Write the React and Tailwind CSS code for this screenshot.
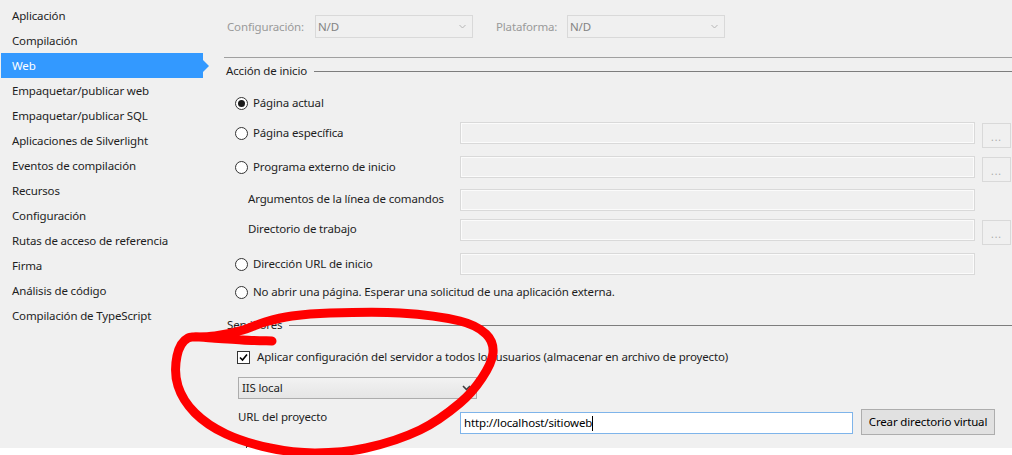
import React from "react";

const sidebarItems = [
  "Aplicación",
  "Compilación",
  "Web",
  "Empaquetar/publicar web",
  "Empaquetar/publicar SQL",
  "Aplicaciones de Silverlight",
  "Eventos de compilación",
  "Recursos",
  "Configuración",
  "Rutas de acceso de referencia",
  "Firma",
  "Análisis de código",
  "Compilación de TypeScript",
];

function smoothPath(pts) {
  let d = `M ${pts[0][0]} ${pts[0][1]}`;
  for (let i = 0; i < pts.length - 1; i++) {
    const p0 = pts[i - 1] || pts[i];
    const p1 = pts[i];
    const p2 = pts[i + 1];
    const p3 = pts[i + 2] || p2;
    const c1x = p1[0] + (p2[0] - p0[0]) / 6;
    const c1y = p1[1] + (p2[1] - p0[1]) / 6;
    const c2x = p2[0] - (p3[0] - p1[0]) / 6;
    const c2y = p2[1] - (p3[1] - p1[1]) / 6;
    d += ` C ${c1x} ${c1y} ${c2x} ${c2y} ${p2[0]} ${p2[1]}`;
  }
  return d;
}

const redPts = [
  [272, 341], [242, 340], [212, 338], [188, 338], [177, 356], [178, 386],
  [195, 413], [226, 434], [270, 448], [315, 453], [366, 448], [420, 430],
  [460, 403], [482, 378], [493, 353], [486, 334], [460, 321], [400, 313],
  [330, 313], [292, 316], [265, 322], [243, 330], [215, 336], [192, 337],
];

function Radio({ checked }) {
  return (
    <span className="w-[13px] h-[13px] rounded-full border border-[#333333] bg-white flex items-center justify-center shrink-0">
      {checked && <span className="w-[7px] h-[7px] rounded-full bg-[#1a1a1a]" />}
    </span>
  );
}

function Checkbox({ checked }) {
  return (
    <span className="w-[13px] h-[13px] border border-[#333333] bg-white flex items-center justify-center shrink-0">
      {checked && (
        <svg width="9" height="9" viewBox="0 0 9 9">
          <path d="M1 4.5 L3.5 7 L8 1.5" fill="none" stroke="#000" strokeWidth="1.6" />
        </svg>
      )}
    </span>
  );
}

function DisabledBox() {
  return (
    <div className="w-[515px] h-[22px] border border-[#d9d9d9] bg-[#f0f0f0] shadow-[inset_0_0_0_1px_#fbfbfb] shrink-0" />
  );
}

function DotsButton() {
  return (
    <div className="ml-[7px] mt-[1px] w-[29px] h-[25px] border border-[#d9d9d9] bg-[#f0f0f0] flex items-end justify-center pb-[5px] text-[10px] leading-none text-[#a9a9a9] tracking-[1px] shrink-0">
      ...
    </div>
  );
}

function DisabledSelect({ w }) {
  return (
    <div className={`${w} h-[23px] border border-[#d9d9d9] bg-[#f0f0f0] flex items-center justify-between pl-[2px] pr-[6px] text-[#838383]`}>
      <span>N/D</span>
      <svg width="7" height="5" viewBox="0 0 7 5">
        <path d="M0.5 1 L3.5 4 L6.5 1" fill="none" stroke="#b5b5b5" strokeWidth="1" />
      </svg>
    </div>
  );
}

export default function App() {
  return (
    <div className="relative w-[1012px] h-[455px] bg-white overflow-hidden font-['Noto_Sans',sans-serif] text-[11.5px] tracking-[-0.15px] leading-[16px] text-[#1e1e1e]">
      <div className="h-[448px] bg-[#f0f0f0] flex overflow-hidden">
        {/* Sidebar */}
        <aside className="w-[204px] shrink-0 pt-[3px] flex flex-col *:shrink-0">
          {sidebarItems.map((item) =>
            item === "Web" ? (
              <div
                key={item}
                className="relative ml-[1px] w-[202px] h-[25px] flex items-center pl-[11px] bg-[#3399ff] text-white"
              >
                {item}
                <span className="absolute right-[-6px] top-[7px] w-0 h-0 border-y-[6px] border-y-transparent border-l-[6px] border-l-[#3399ff]" />
              </div>
            ) : (
              <div key={item} className="h-[25px] flex items-center pl-[12px]">
                {item}
              </div>
            )
          )}
        </aside>

        {/* Main */}
        <main className="flex-1 pl-[20px] flex flex-col *:shrink-0">
          <div className="mt-[15px] h-[23px] flex items-center text-[#9a9a9a]">
            <span className="ml-[3px] w-[88px]">Configuración:</span>
            <DisabledSelect w="w-[158px]" />
            <span className="ml-[23px] w-[71px]">Plataforma:</span>
            <DisabledSelect w="w-[158px]" />
          </div>

          <div className="mt-[19px] h-px bg-[#a0a0a0]" />

          <div className="mt-[5px] h-[16px] flex items-center">
            <span className="ml-[2px]">Acción de inicio</span>
            <span className="ml-[7px] flex-1 h-px bg-[#7d7d7d]" />
          </div>

          {/* Página actual */}
          <div className="mt-[13px] h-[22px] flex items-center">
            <div className="w-[236px] flex items-center pl-[11px]">
              <Radio checked />
              <span className="ml-[5px]">Página actual</span>
            </div>
          </div>

          {/* Página específica */}
          <div className="mt-[8px] h-[22px] flex items-start">
            <div className="w-[236px] h-[22px] flex items-center pl-[11px]">
              <Radio />
              <span className="ml-[5px]">Página específica</span>
            </div>
            <DisabledBox />
            <DotsButton />
          </div>

          {/* Programa externo */}
          <div className="mt-[12px] h-[22px] flex items-start">
            <div className="w-[236px] h-[22px] flex items-center pl-[11px]">
              <Radio />
              <span className="ml-[5px]">Programa externo de inicio</span>
            </div>
            <DisabledBox />
            <DotsButton />
          </div>

          {/* Argumentos */}
          <div className="mt-[11px] h-[22px] flex items-start">
            <div className="w-[236px] h-[20px] flex items-center pl-[24px]">
              Argumentos de la línea de comandos
            </div>
            <DisabledBox />
          </div>

          {/* Directorio */}
          <div className="mt-[8px] h-[22px] flex items-start">
            <div className="w-[236px] h-[20px] flex items-center pl-[24px]">
              Directorio de trabajo
            </div>
            <DisabledBox />
            <DotsButton />
          </div>

          {/* URL de inicio */}
          <div className="mt-[12px] h-[22px] flex items-start">
            <div className="w-[236px] h-[22px] flex items-center pl-[11px]">
              <Radio />
              <span className="ml-[5px]">Dirección URL de inicio</span>
            </div>
            <DisabledBox />
          </div>

          {/* No abrir */}
          <div className="mt-[6px] h-[22px] flex items-center pl-[11px]">
            <Radio />
            <span className="ml-[5px]">
              No abrir una página. Esperar una solicitud de una aplicación externa.
            </span>
          </div>

          {/* Servidores */}
          <div className="mt-[14px] h-[16px] flex items-center">
            <span className="ml-[3px]">Servidores</span>
            <span className="ml-[7px] flex-1 h-px bg-[#7d7d7d]" />
          </div>

          <div className="mt-[13px] h-[22px] flex items-center pl-[13px]">
            <Checkbox checked />
            <span className="ml-[7px]">
              Aplicar configuración del servidor a todos los usuarios (almacenar en archivo de proyecto)
            </span>
          </div>

          <div className="mt-[9px] ml-[14px] w-[239px] h-[22px] border border-[#acacac] bg-gradient-to-b from-[#f2f2f2] to-[#e5e5e5] flex items-center justify-between pl-[3px] pr-[5px]">
            <span>IIS local</span>
            <svg width="9" height="6" viewBox="0 0 9 6">
              <path d="M1 1 L4.5 4.5 L8 1" fill="none" stroke="#404040" strokeWidth="1.6" />
            </svg>
          </div>

          <div className="mt-[10px] h-[26px] flex items-start">
            <div className="ml-[14px] w-[222px] h-[16px] flex items-center">URL del proyecto</div>
            <div className="mt-[3px] w-[393px] h-[22px] border border-[#7eb4ea] bg-white flex items-center pl-[3px] text-black">
              <span>http://localhost/sitioweb</span>
              <span className="w-px h-[15px] bg-black" />
            </div>
            <div className="ml-[8px] w-[134px] h-[26px] border border-[#adadad] bg-[#e1e1e1] flex items-center justify-center text-black">
              Crear directorio virtual
            </div>
          </div>

          <div className="mt-[6px] h-[22px] flex items-center pl-[22px]">
            <Checkbox />
            <span className="ml-[7px]">Invalidar la dirección URL raíz de la aplicación</span>
          </div>
        </main>
      </div>

      <svg
        className="absolute inset-0 pointer-events-none"
        width="1012"
        height="455"
        viewBox="0 0 1012 455"
      >
        <path
          d={smoothPath(redPts)}
          fill="none"
          stroke="#ff0000"
          strokeWidth="9"
          strokeLinecap="round"
          strokeLinejoin="round"
        />
      </svg>
    </div>
  );
}
